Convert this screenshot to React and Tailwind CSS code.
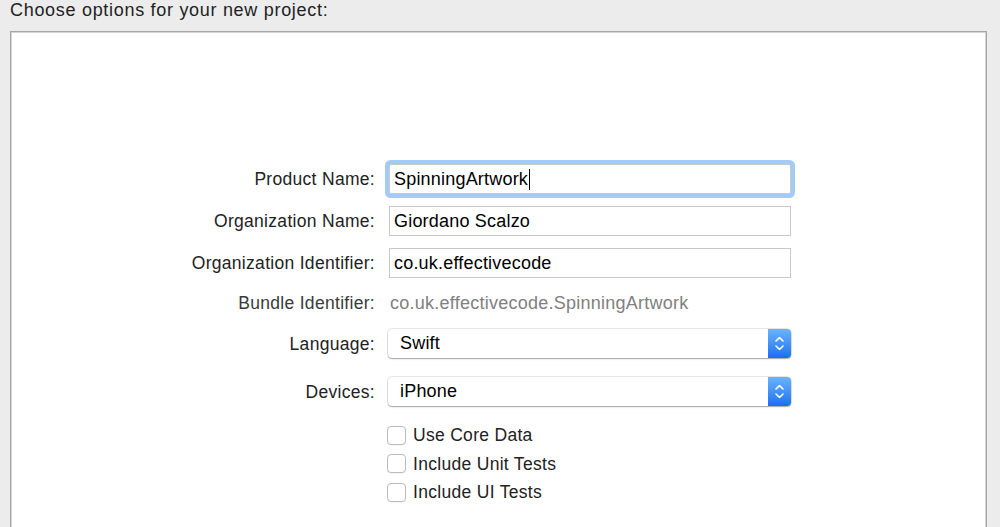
import React from "react";

const font = { fontFamily: '"Liberation Sans", Arial, sans-serif' };

function Label({ children, muted }) {
  return (
    <div className={`w-[364px] shrink-0 text-right text-[17.5px] leading-[20px] tracking-[0.3px] ${muted ? "text-[#3a3a3a]" : "text-[#222222]"}`}>
      {children}
    </div>
  );
}

function TextField({ value, focused }) {
  return (
    <div
      className={`ml-[14px] w-[402px] h-[30px] bg-white border border-[#c9c9c9] flex items-center pl-[4px] text-[18px] tracking-[0.2px] text-black ${
        focused ? "rounded-[2px] shadow-[0_0_0_4px_#a4cbf6]" : ""
      }`}
    >
      <span>{value}</span>
      {focused && <span className="inline-block w-px h-[21px] bg-black ml-[1px]" />}
    </div>
  );
}

function Popup({ value }) {
  return (
    <div className="ml-[13px] w-[403px] h-[29px] bg-white rounded-[4px] flex items-stretch shadow-[0_0_0_0.5px_rgba(0,0,0,0.18),0_1px_1.5px_rgba(0,0,0,0.3)]">
      <div className="flex-1 flex items-center pl-[12px] text-[18px] tracking-[0.2px] text-black">{value}</div>
      <div className="w-[23px] rounded-r-[4px] bg-gradient-to-b from-[#6cb3fb] to-[#1570ef] flex flex-col items-center justify-center gap-[3px]">
        <svg width="9" height="6" viewBox="0 0 9 6">
          <path d="M1 5 L4.5 1.5 L8 5" fill="none" stroke="white" strokeWidth="1.6" strokeLinecap="round" strokeLinejoin="round" />
        </svg>
        <svg width="9" height="6" viewBox="0 0 9 6">
          <path d="M1 1 L4.5 4.5 L8 1" fill="none" stroke="white" strokeWidth="1.6" strokeLinecap="round" strokeLinejoin="round" />
        </svg>
      </div>
    </div>
  );
}

function Check({ label }) {
  return (
    <div className="flex items-center h-[20px] pl-[376px]">
      <div className="w-[19px] h-[19px] rounded-[4px] bg-white border border-[#bcbcbc] shadow-[0_0.5px_0.5px_rgba(0,0,0,0.08)]" />
      <span className="ml-[7px] text-[17.5px] leading-[20px] tracking-[0.3px] text-[#222222]">{label}</span>
    </div>
  );
}

export default function App() {
  return (
    <div className="w-[1000px] h-[527px] overflow-hidden bg-[#ececec]" style={font}>
      <div className="pl-[10px] h-[20px] text-[18px] leading-[20px] tracking-[0.7px] text-[#222222]">
        Choose options for your new project:
      </div>
      <div className="mt-[11px] ml-[10px] w-[977px] h-[520px] bg-white border border-[#a6a6a6] shadow-[inset_0_0_0_1px_#d4d4d4]">
        <div className="pt-[132px] flex flex-col">
          <div className="flex items-center">
            <Label>Product Name:</Label>
            <TextField value="SpinningArtwork" focused />
          </div>
          <div className="flex items-center mt-[12px]">
            <Label>Organization Name:</Label>
            <TextField value="Giordano Scalzo" />
          </div>
          <div className="flex items-center mt-[12px]">
            <Label>Organization Identifier:</Label>
            <TextField value="co.uk.effectivecode" />
          </div>
          <div className="flex items-center mt-[12px] h-[26px]">
            <Label muted>Bundle Identifier:</Label>
            <div className="ml-[15px] text-[18px] tracking-[0.25px] text-[#808080]">co.uk.effectivecode.SpinningArtwork</div>
          </div>
          <div className="flex items-center mt-[13px]">
            <Label>Language:</Label>
            <Popup value="Swift" />
          </div>
          <div className="flex items-center mt-[19px]">
            <Label>Devices:</Label>
            <Popup value="iPhone" />
          </div>
          <div className="mt-[19px] flex flex-col gap-[8.5px]">
            <Check label="Use Core Data" />
            <Check label="Include Unit Tests" />
            <Check label="Include UI Tests" />
          </div>
        </div>
      </div>
    </div>
  );
}
